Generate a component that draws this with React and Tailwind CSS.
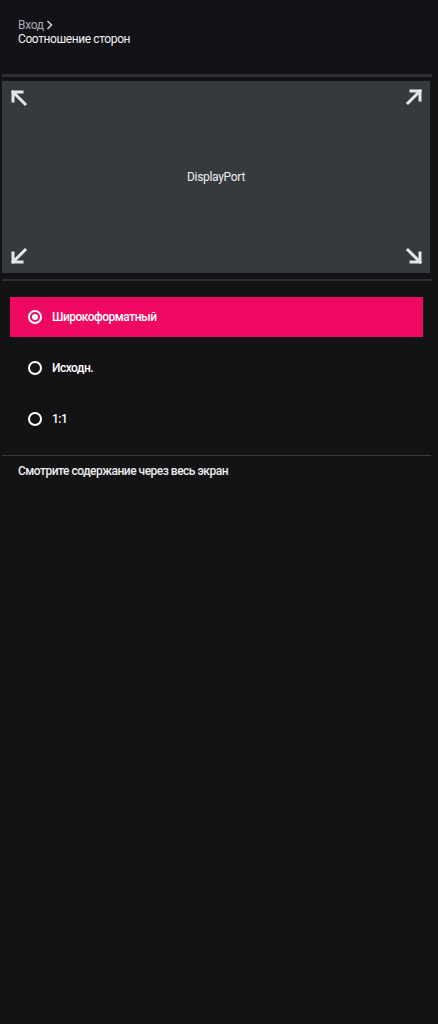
import React from 'react';

const font = { fontFamily: 'Roboto, "Liberation Sans", sans-serif' };

function Arrow({ rotate }) {
    // points to top-left by default
    return (
        <svg width="18" height="18" viewBox="0 0 18 18" className={rotate}>
            <path d="M3 3 L15 15" stroke="#e6e7ea" strokeWidth="3" strokeLinecap="square" fill="none" />
            <path d="M3 12 L3 3 L12 3" stroke="#e6e7ea" strokeWidth="3" strokeLinecap="square" fill="none" />
        </svg>
    );
}

function Radio({ checked }) {
    return (
        <div className="w-[14px] h-[14px] rounded-full border-2 border-white flex items-center justify-center">
            {checked && <div className="w-[6px] h-[6px] rounded-full bg-white" />}
        </div>
    );
}

const options = [
    { label: 'Широкоформатный', checked: true },
    { label: 'Исходн.', checked: false },
    { label: '1:1', checked: false },
];

export default function App() {
    return (
        <div className="w-[438px] h-[1024px] bg-[#131315] text-white" style={font}>
            <div className="h-[74px] bg-[#121218] px-[18px] pt-[18px]">
                <div className="flex items-center gap-[2px] text-[12px] leading-[14px] text-[#a9a9b2] tracking-[-0.3px]">
                    Вход
                    <svg width="7" height="10" viewBox="0 0 7 10">
                        <path d="M1.5 1 L5.5 5 L1.5 9" stroke="#c9c9d0" strokeWidth="1.6" fill="none" />
                    </svg>
                </div>
                <div className="text-[12px] leading-[14px] tracking-[-0.4px] text-[#f2f2f5]">Соотношение сторон</div>
            </div>

            <div className="ml-[2px] w-[430px] h-[3px] bg-[#2e2f33]" />

            <div className="ml-[2px] mt-[4px] w-[428px] h-[192px] bg-[#363a3f] relative flex items-center justify-center">
                <span className="text-[12px] tracking-[-0.3px] text-[#eeeef0]">DisplayPort</span>
                <div className="absolute left-[8px] top-[8px]"><Arrow rotate="" /></div>
                <div className="absolute right-[7px] top-[7px]"><Arrow rotate="rotate-90" /></div>
                <div className="absolute left-[8px] bottom-[8px]"><Arrow rotate="-rotate-90" /></div>
                <div className="absolute right-[7px] bottom-[8px]"><Arrow rotate="rotate-180" /></div>
            </div>

            <div className="ml-[2px] mt-[6px] w-[430px] h-[2px] bg-[#2e2f33]" />

            <div className="flex flex-col gap-[11px] mt-[16px]">
                {options.map((o) => (
                    <div
                        key={o.label}
                        className={`ml-[10px] w-[413px] h-[40px] flex items-center gap-[10px] pl-[18px] ${o.checked ? 'bg-[#ee0862]' : ''}`}
                    >
                        <Radio checked={o.checked} />
                        <span className="text-[12px] font-medium tracking-[-0.5px] text-white">{o.label}</span>
                    </div>
                ))}
            </div>

            <div className="ml-[2px] mt-[16px] w-[429px] h-[1px] bg-[#3a3b3f]" />

            <div className="px-[18px] pt-[6px] text-[12px] font-medium tracking-[-0.5px] text-[#ededf0]">
                Смотрите содержание через весь экран
            </div>
        </div>
    );
}
